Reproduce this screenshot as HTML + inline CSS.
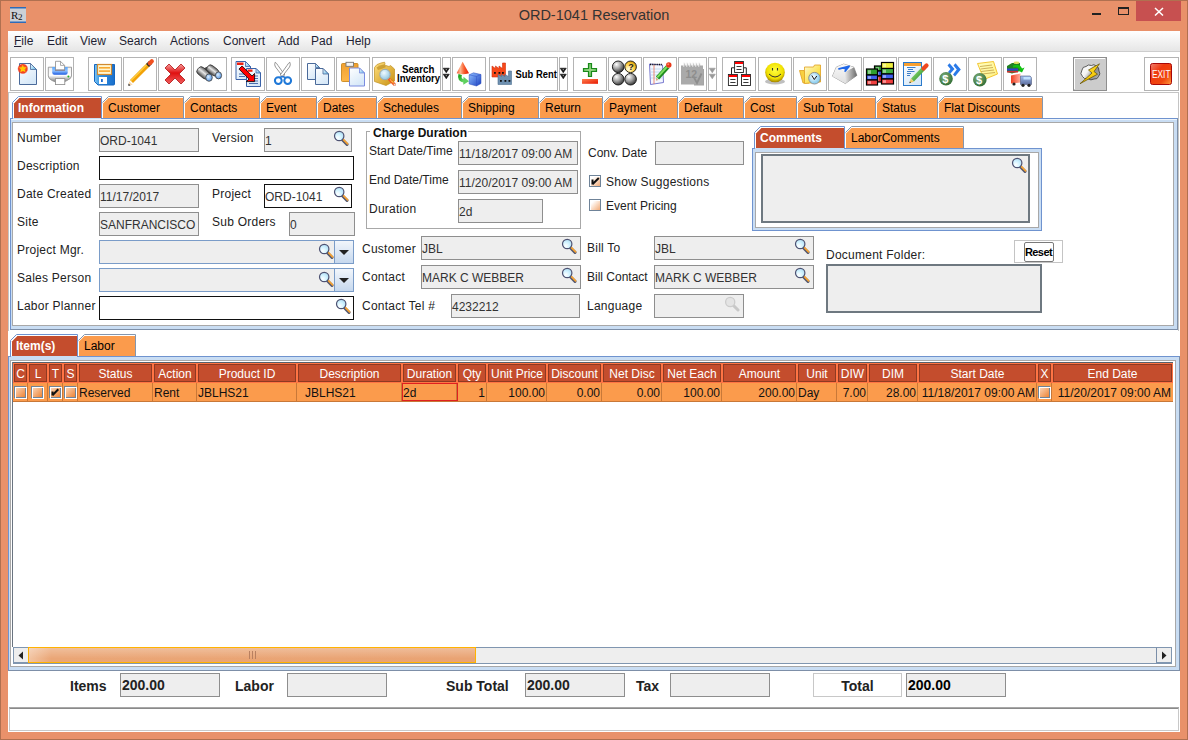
<!DOCTYPE html>
<html><head><meta charset="utf-8"><style>
html,body{margin:0;padding:0;width:1188px;height:740px;overflow:hidden;background:#E9916A}
div{position:absolute;box-sizing:border-box}
.t{white-space:nowrap;line-height:14px;font-family:"Liberation Sans",sans-serif}
</style></head><body>
<div style="left:0px;top:0px;width:1188px;height:740px;background:#E9916A"></div><div style="left:0px;top:0px;width:1188px;height:1px;background:#B07050"></div><div style="left:0px;top:0px;width:1px;height:740px;background:#B07050"></div><div style="left:1187px;top:0px;width:1px;height:740px;background:#B07050"></div><div style="left:0px;top:739px;width:1188px;height:1px;background:#B07050"></div><svg style="position:absolute;left:10px;top:7px" width="16" height="16" viewBox="0 0 16 16"><rect x="0" y="0" width="16" height="16" fill="#CCD0D6"/><rect x="0" y="0" width="16" height="1.5" fill="#2E6BB8"/><rect x="0" y="14.5" width="16" height="1.5" fill="#2E6BB8"/><text x="1" y="12" font-family="Liberation Serif" font-size="11" fill="#111">R</text><text x="8" y="13" font-family="Liberation Serif" font-size="9" fill="#111">2</text></svg><div class="t" style="left:394px;top:8px;width:400px;text-align:center;font-size:14.5px;font-weight:normal;color:#333;">ORD-1041 Reservation</div><div style="left:1092px;top:13px;width:9px;height:2px;background:#222"></div><div style="left:1118px;top:7px;width:11px;height:8px;border:1px solid #222;border-top:2px solid #222"></div><div style="left:1136px;top:1px;width:45px;height:20px;background:#C75050"></div><svg style="position:absolute;left:1154px;top:7px" width="10" height="9" viewBox="0 0 10 9"><path d="M1 1 L9 8.5 M9 1 L1 8.5" stroke="#fff" stroke-width="1.5"/></svg><div style="left:8px;top:31px;width:1172px;height:701px;background:#FFFFFF"></div><div style="left:8px;top:31px;width:1172px;height:20px;background:linear-gradient(#FFFFFF,#E6E6E6)"></div><div style="left:8px;top:51px;width:1172px;height:1px;background:#CDCDCD"></div><div class="t" style="left:14px;top:34px;font-size:12px;font-weight:normal;color:#1F1F33;"><u>F</u>ile</div><div class="t" style="left:47px;top:34px;font-size:12px;font-weight:normal;color:#1F1F33;">Edit</div><div class="t" style="left:80px;top:34px;font-size:12px;font-weight:normal;color:#1F1F33;">View</div><div class="t" style="left:119px;top:34px;font-size:12px;font-weight:normal;color:#1F1F33;">Search</div><div class="t" style="left:170px;top:34px;font-size:12px;font-weight:normal;color:#1F1F33;">Actions</div><div class="t" style="left:223px;top:34px;font-size:12px;font-weight:normal;color:#1F1F33;">Convert</div><div class="t" style="left:278px;top:34px;font-size:12px;font-weight:normal;color:#1F1F33;">Add</div><div class="t" style="left:311px;top:34px;font-size:12px;font-weight:normal;color:#1F1F33;">Pad</div><div class="t" style="left:346px;top:34px;font-size:12px;font-weight:normal;color:#1F1F33;">Help</div><div style="left:10px;top:57px;width:34px;height:34px;border:1px solid #B4B4B4;background:#FFFFFF"></div><div style="left:45px;top:57px;width:29px;height:34px;border:1px solid #B4B4B4;background:#FFFFFF"></div><div style="left:88px;top:57px;width:34px;height:34px;border:1px solid #B4B4B4;background:#FFFFFF"></div><div style="left:123px;top:57px;width:34px;height:34px;border:1px solid #B4B4B4;background:#FFFFFF"></div><div style="left:158px;top:57px;width:34px;height:34px;border:1px solid #B4B4B4;background:#FFFFFF"></div><div style="left:193px;top:57px;width:34px;height:34px;border:1px solid #B4B4B4;background:#FFFFFF"></div><div style="left:231px;top:57px;width:34px;height:34px;border:1px solid #B4B4B4;background:#FFFFFF"></div><div style="left:266px;top:57px;width:34px;height:34px;border:1px solid #B4B4B4;background:#FFFFFF"></div><div style="left:301px;top:57px;width:34px;height:34px;border:1px solid #B4B4B4;background:#FFFFFF"></div><div style="left:336px;top:57px;width:34px;height:34px;border:1px solid #B4B4B4;background:#FFFFFF"></div><div style="left:372px;top:57px;width:69px;height:34px;border:1px solid #B4B4B4;background:#FFFFFF"></div><div style="left:442px;top:57px;width:9px;height:34px;border:1px solid #B4B4B4;background:#FFFFFF"></div><div style="left:452px;top:57px;width:34px;height:34px;border:1px solid #B4B4B4;background:#FFFFFF"></div><div style="left:489px;top:57px;width:69px;height:34px;border:1px solid #B4B4B4;background:#FFFFFF"></div><div style="left:559px;top:57px;width:9px;height:34px;border:1px solid #B4B4B4;background:#FFFFFF"></div><div style="left:573px;top:57px;width:34px;height:34px;border:1px solid #B4B4B4;background:#FFFFFF"></div><div style="left:608px;top:57px;width:34px;height:34px;border:1px solid #B4B4B4;background:#FFFFFF"></div><div style="left:643px;top:57px;width:34px;height:34px;border:1px solid #B4B4B4;background:#FFFFFF"></div><div style="left:678px;top:57px;width:29px;height:34px;border:1px solid #B4B4B4;background:#FFFFFF"></div><div style="left:708px;top:57px;width:9px;height:34px;border:1px solid #B4B4B4;background:#FFFFFF"></div><div style="left:722px;top:57px;width:34px;height:34px;border:1px solid #B4B4B4;background:#FFFFFF"></div><div style="left:758px;top:57px;width:34px;height:34px;border:1px solid #B4B4B4;background:#FFFFFF"></div><div style="left:793px;top:57px;width:34px;height:34px;border:1px solid #B4B4B4;background:#FFFFFF"></div><div style="left:828px;top:57px;width:34px;height:34px;border:1px solid #B4B4B4;background:#FFFFFF"></div><div style="left:863px;top:57px;width:34px;height:34px;border:1px solid #B4B4B4;background:#FFFFFF"></div><div style="left:898px;top:57px;width:34px;height:34px;border:1px solid #B4B4B4;background:#FFFFFF"></div><div style="left:933px;top:57px;width:34px;height:34px;border:1px solid #B4B4B4;background:#FFFFFF"></div><div style="left:968px;top:57px;width:34px;height:34px;border:1px solid #B4B4B4;background:#FFFFFF"></div><div style="left:1003px;top:57px;width:34px;height:34px;border:1px solid #B4B4B4;background:#FFFFFF"></div><div style="left:1073px;top:57px;width:34px;height:34px;border:1px solid #8E8E8E;background:#FFFFFF"></div><div style="left:1144px;top:57px;width:35px;height:34px;border:1px solid #B4B4B4;background:#FFFFFF"></div><div style="left:8px;top:92px;width:1171px;height:239px;border:1px solid #C4C4C4;border-bottom:none"></div><div style="left:10px;top:118px;width:1168px;height:212px;border:1px solid #6F93CF;border-right-color:#7D8FA8;border-bottom-color:#7D8FA8;background:#C9DDF3"></div><div style="left:12px;top:122px;width:1162px;height:204px;border:1px solid #A8A8A8;border-right-color:#A8A8A8;background:#FFFFFF"></div><div style="left:11px;top:119px;width:1166px;height:1px;background:#EEF5FC"></div><svg style="position:absolute;left:12px;top:96px" width="90" height="22" viewBox="0 0 90 22"><polygon points="0,22 0,6 6,0 90,0 90,22" fill="#FFFFFF"/><polygon points="2,22 2,7.4 7.4,2 89,2 89,22" fill="#C44D2D"/><polyline points="0.5,22 0.5,6.5 6.5,0.5 89.5,0.5 89.5,22" fill="none" stroke="#6F93CF" stroke-width="1"/></svg><div style="left:13px;top:118px;width:88px;height:1px;background:#C9DDF3"></div><div class="t" style="left:18px;top:101px;font-size:12px;font-weight:bold;color:#FFFFFF;">Information</div><svg style="position:absolute;left:102px;top:96px" width="82" height="22" viewBox="0 0 82 22"><polygon points="0,22 0,6 6,0 82,0 82,22" fill="#FFFFFF"/><polygon points="1,22 1,7.4 6.4,2 81,2 81,22" fill="#FB9B4C"/><polyline points="0.5,6.5 6.5,0.5 81.5,0.5 81.5,22" fill="none" stroke="#8496AE" stroke-width="1"/></svg><div class="t" style="left:108px;top:101px;font-size:12px;font-weight:normal;color:#000000;">Customer</div><svg style="position:absolute;left:184px;top:96px" width="76" height="22" viewBox="0 0 76 22"><polygon points="0,22 0,6 6,0 76,0 76,22" fill="#FFFFFF"/><polygon points="1,22 1,7.4 6.4,2 75,2 75,22" fill="#FB9B4C"/><polyline points="0.5,6.5 6.5,0.5 75.5,0.5 75.5,22" fill="none" stroke="#8496AE" stroke-width="1"/></svg><div class="t" style="left:190px;top:101px;font-size:12px;font-weight:normal;color:#000000;">Contacts</div><svg style="position:absolute;left:260px;top:96px" width="57" height="22" viewBox="0 0 57 22"><polygon points="0,22 0,6 6,0 57,0 57,22" fill="#FFFFFF"/><polygon points="1,22 1,7.4 6.4,2 56,2 56,22" fill="#FB9B4C"/><polyline points="0.5,6.5 6.5,0.5 56.5,0.5 56.5,22" fill="none" stroke="#8496AE" stroke-width="1"/></svg><div class="t" style="left:266px;top:101px;font-size:12px;font-weight:normal;color:#000000;">Event</div><svg style="position:absolute;left:317px;top:96px" width="60" height="22" viewBox="0 0 60 22"><polygon points="0,22 0,6 6,0 60,0 60,22" fill="#FFFFFF"/><polygon points="1,22 1,7.4 6.4,2 59,2 59,22" fill="#FB9B4C"/><polyline points="0.5,6.5 6.5,0.5 59.5,0.5 59.5,22" fill="none" stroke="#8496AE" stroke-width="1"/></svg><div class="t" style="left:323px;top:101px;font-size:12px;font-weight:normal;color:#000000;">Dates</div><svg style="position:absolute;left:377px;top:96px" width="85" height="22" viewBox="0 0 85 22"><polygon points="0,22 0,6 6,0 85,0 85,22" fill="#FFFFFF"/><polygon points="1,22 1,7.4 6.4,2 84,2 84,22" fill="#FB9B4C"/><polyline points="0.5,6.5 6.5,0.5 84.5,0.5 84.5,22" fill="none" stroke="#8496AE" stroke-width="1"/></svg><div class="t" style="left:383px;top:101px;font-size:12px;font-weight:normal;color:#000000;">Schedules</div><svg style="position:absolute;left:462px;top:96px" width="77" height="22" viewBox="0 0 77 22"><polygon points="0,22 0,6 6,0 77,0 77,22" fill="#FFFFFF"/><polygon points="1,22 1,7.4 6.4,2 76,2 76,22" fill="#FB9B4C"/><polyline points="0.5,6.5 6.5,0.5 76.5,0.5 76.5,22" fill="none" stroke="#8496AE" stroke-width="1"/></svg><div class="t" style="left:468px;top:101px;font-size:12px;font-weight:normal;color:#000000;">Shipping</div><svg style="position:absolute;left:539px;top:96px" width="64" height="22" viewBox="0 0 64 22"><polygon points="0,22 0,6 6,0 64,0 64,22" fill="#FFFFFF"/><polygon points="1,22 1,7.4 6.4,2 63,2 63,22" fill="#FB9B4C"/><polyline points="0.5,6.5 6.5,0.5 63.5,0.5 63.5,22" fill="none" stroke="#8496AE" stroke-width="1"/></svg><div class="t" style="left:545px;top:101px;font-size:12px;font-weight:normal;color:#000000;">Return</div><svg style="position:absolute;left:603px;top:96px" width="75" height="22" viewBox="0 0 75 22"><polygon points="0,22 0,6 6,0 75,0 75,22" fill="#FFFFFF"/><polygon points="1,22 1,7.4 6.4,2 74,2 74,22" fill="#FB9B4C"/><polyline points="0.5,6.5 6.5,0.5 74.5,0.5 74.5,22" fill="none" stroke="#8496AE" stroke-width="1"/></svg><div class="t" style="left:609px;top:101px;font-size:12px;font-weight:normal;color:#000000;">Payment</div><svg style="position:absolute;left:678px;top:96px" width="66" height="22" viewBox="0 0 66 22"><polygon points="0,22 0,6 6,0 66,0 66,22" fill="#FFFFFF"/><polygon points="1,22 1,7.4 6.4,2 65,2 65,22" fill="#FB9B4C"/><polyline points="0.5,6.5 6.5,0.5 65.5,0.5 65.5,22" fill="none" stroke="#8496AE" stroke-width="1"/></svg><div class="t" style="left:684px;top:101px;font-size:12px;font-weight:normal;color:#000000;">Default</div><svg style="position:absolute;left:744px;top:96px" width="53" height="22" viewBox="0 0 53 22"><polygon points="0,22 0,6 6,0 53,0 53,22" fill="#FFFFFF"/><polygon points="1,22 1,7.4 6.4,2 52,2 52,22" fill="#FB9B4C"/><polyline points="0.5,6.5 6.5,0.5 52.5,0.5 52.5,22" fill="none" stroke="#8496AE" stroke-width="1"/></svg><div class="t" style="left:750px;top:101px;font-size:12px;font-weight:normal;color:#000000;">Cost</div><svg style="position:absolute;left:797px;top:96px" width="79" height="22" viewBox="0 0 79 22"><polygon points="0,22 0,6 6,0 79,0 79,22" fill="#FFFFFF"/><polygon points="1,22 1,7.4 6.4,2 78,2 78,22" fill="#FB9B4C"/><polyline points="0.5,6.5 6.5,0.5 78.5,0.5 78.5,22" fill="none" stroke="#8496AE" stroke-width="1"/></svg><div class="t" style="left:803px;top:101px;font-size:12px;font-weight:normal;color:#000000;">Sub Total</div><svg style="position:absolute;left:876px;top:96px" width="62" height="22" viewBox="0 0 62 22"><polygon points="0,22 0,6 6,0 62,0 62,22" fill="#FFFFFF"/><polygon points="1,22 1,7.4 6.4,2 61,2 61,22" fill="#FB9B4C"/><polyline points="0.5,6.5 6.5,0.5 61.5,0.5 61.5,22" fill="none" stroke="#8496AE" stroke-width="1"/></svg><div class="t" style="left:882px;top:101px;font-size:12px;font-weight:normal;color:#000000;">Status</div><svg style="position:absolute;left:938px;top:96px" width="105" height="22" viewBox="0 0 105 22"><polygon points="0,22 0,6 6,0 105,0 105,22" fill="#FFFFFF"/><polygon points="1,22 1,7.4 6.4,2 104,2 104,22" fill="#FB9B4C"/><polyline points="0.5,6.5 6.5,0.5 104.5,0.5 104.5,22" fill="none" stroke="#8496AE" stroke-width="1"/></svg><div class="t" style="left:944px;top:101px;font-size:12px;font-weight:normal;color:#000000;">Flat Discounts</div><div class="t" style="left:17px;top:131px;font-size:12px;font-weight:normal;color:#222;letter-spacing:0.25px">Number</div><div class="t" style="left:17px;top:159px;font-size:12px;font-weight:normal;color:#222;letter-spacing:0.25px">Description</div><div class="t" style="left:17px;top:187px;font-size:12px;font-weight:normal;color:#222;letter-spacing:0.25px">Date Created</div><div class="t" style="left:17px;top:215px;font-size:12px;font-weight:normal;color:#222;letter-spacing:0.25px">Site</div><div class="t" style="left:17px;top:243px;font-size:12px;font-weight:normal;color:#222;letter-spacing:0.25px">Project Mgr.</div><div class="t" style="left:17px;top:271px;font-size:12px;font-weight:normal;color:#222;letter-spacing:0.25px">Sales Person</div><div class="t" style="left:17px;top:299px;font-size:12px;font-weight:normal;color:#222;letter-spacing:0.25px">Labor Planner</div><div style="left:99px;top:128px;width:100px;height:24px;background:#EEEEEE;border:1px solid #8E8E8E"></div><div class="t" style="left:100px;top:134px;font-size:12px;font-weight:normal;color:#333;">ORD-1041</div><div class="t" style="left:212px;top:131px;font-size:12px;font-weight:normal;color:#222;letter-spacing:0.25px">Version</div><div style="left:264px;top:128px;width:88px;height:24px;background:#EEEEEE;border:1px solid #8E8E8E"></div><div class="t" style="left:265px;top:134px;font-size:12px;font-weight:normal;color:#333;">1</div><svg style="position:absolute;left:333px;top:130px" width="16" height="16" viewBox="0 0 16 16"><path d="M9.6 10 L14 14.4" stroke="#55586E" stroke-width="3" stroke-linecap="round"/><path d="M10.2 9.4 L14.6 13.8" stroke="#F5A232" stroke-width="1.7" stroke-linecap="round"/><circle cx="6.2" cy="6" r="4.7" fill="url(#magG)" stroke="#4E5272" stroke-width="1.2"/></svg><div style="left:99px;top:156px;width:255px;height:24px;background:#FFFFFF;border:1px solid #111"></div><div style="left:99px;top:184px;width:100px;height:24px;background:#EEEEEE;border:1px solid #8E8E8E"></div><div class="t" style="left:100px;top:190px;font-size:12px;font-weight:normal;color:#333;">11/17/2017</div><div class="t" style="left:212px;top:187px;font-size:12px;font-weight:normal;color:#222;letter-spacing:0.25px">Project</div><div style="left:264px;top:184px;width:88px;height:24px;background:#FFFFFF;border:1px solid #111"></div><div class="t" style="left:265px;top:190px;font-size:12px;font-weight:normal;color:#333;">ORD-1041</div><svg style="position:absolute;left:333px;top:186px" width="16" height="16" viewBox="0 0 16 16"><path d="M9.6 10 L14 14.4" stroke="#55586E" stroke-width="3" stroke-linecap="round"/><path d="M10.2 9.4 L14.6 13.8" stroke="#F5A232" stroke-width="1.7" stroke-linecap="round"/><circle cx="6.2" cy="6" r="4.7" fill="url(#magG)" stroke="#4E5272" stroke-width="1.2"/></svg><div style="left:99px;top:212px;width:100px;height:24px;background:#EEEEEE;border:1px solid #8E8E8E"></div><div class="t" style="left:100px;top:218px;font-size:12px;font-weight:normal;color:#333;">SANFRANCISCO</div><div class="t" style="left:212px;top:215px;font-size:12px;font-weight:normal;color:#222;letter-spacing:0.25px">Sub Orders</div><div style="left:289px;top:212px;width:66px;height:24px;background:#EEEEEE;border:1px solid #8E8E8E"></div><div class="t" style="left:290px;top:218px;font-size:12px;font-weight:normal;color:#333;">0</div><div style="left:99px;top:240px;width:255px;height:24px;background:#EEEEEE;border:1px solid #7A9CC8"></div><svg style="position:absolute;left:318px;top:243px" width="16" height="16" viewBox="0 0 16 16"><path d="M9.6 10 L14 14.4" stroke="#55586E" stroke-width="3" stroke-linecap="round"/><path d="M10.2 9.4 L14.6 13.8" stroke="#F5A232" stroke-width="1.7" stroke-linecap="round"/><circle cx="6.2" cy="6" r="4.7" fill="url(#magG)" stroke="#4E5272" stroke-width="1.2"/></svg><div style="left:334px;top:240px;width:20px;height:24px;background:linear-gradient(#F2F6FB,#C6D8EE);border:1px solid #7A9CC8"></div><svg style="position:absolute;left:338px;top:249px" width="12" height="7" viewBox="0 0 12 7"><polygon points="1,1 11,1 6,6" fill="#222"/></svg><div style="left:99px;top:268px;width:255px;height:24px;background:#EEEEEE;border:1px solid #7A9CC8"></div><svg style="position:absolute;left:318px;top:271px" width="16" height="16" viewBox="0 0 16 16"><path d="M9.6 10 L14 14.4" stroke="#55586E" stroke-width="3" stroke-linecap="round"/><path d="M10.2 9.4 L14.6 13.8" stroke="#F5A232" stroke-width="1.7" stroke-linecap="round"/><circle cx="6.2" cy="6" r="4.7" fill="url(#magG)" stroke="#4E5272" stroke-width="1.2"/></svg><div style="left:334px;top:268px;width:20px;height:24px;background:linear-gradient(#F2F6FB,#C6D8EE);border:1px solid #7A9CC8"></div><svg style="position:absolute;left:338px;top:277px" width="12" height="7" viewBox="0 0 12 7"><polygon points="1,1 11,1 6,6" fill="#222"/></svg><div style="left:99px;top:296px;width:255px;height:24px;background:#FFFFFF;border:1px solid #111"></div><svg style="position:absolute;left:335px;top:298px" width="16" height="16" viewBox="0 0 16 16"><path d="M9.6 10 L14 14.4" stroke="#55586E" stroke-width="3" stroke-linecap="round"/><path d="M10.2 9.4 L14.6 13.8" stroke="#F5A232" stroke-width="1.7" stroke-linecap="round"/><circle cx="6.2" cy="6" r="4.7" fill="url(#magG)" stroke="#4E5272" stroke-width="1.2"/></svg><div style="left:366px;top:131px;width:215px;height:98px;border:1px solid #A8A8A8"></div><div style="left:370px;top:126px;width:98px;height:12px;background:#FFFFFF"></div><div class="t" style="left:373px;top:126px;font-size:12px;font-weight:bold;color:#111;">Charge Duration</div><div class="t" style="left:369px;top:144px;font-size:12px;font-weight:normal;color:#222;">Start Date/Time</div><div style="left:458px;top:141px;width:120px;height:24px;background:#EEEEEE;border:1px solid #8E8E8E"></div><div class="t" style="left:459px;top:147px;font-size:12px;font-weight:normal;color:#333;">11/18/2017 09:00 AM</div><div class="t" style="left:369px;top:173px;font-size:12px;font-weight:normal;color:#222;">End Date/Time</div><div style="left:458px;top:170px;width:120px;height:24px;background:#EEEEEE;border:1px solid #8E8E8E"></div><div class="t" style="left:459px;top:176px;font-size:12px;font-weight:normal;color:#333;">11/20/2017 09:00 AM</div><div class="t" style="left:369px;top:202px;font-size:12px;font-weight:normal;color:#222;letter-spacing:0.25px">Duration</div><div style="left:458px;top:199px;width:85px;height:24px;background:#EEEEEE;border:1px solid #8E8E8E"></div><div class="t" style="left:459px;top:205px;font-size:12px;font-weight:normal;color:#333;">2d</div><div class="t" style="left:588px;top:146px;font-size:12px;font-weight:normal;color:#222;">Conv. Date</div><div style="left:655px;top:141px;width:89px;height:24px;background:#EEEEEE;border:1px solid #8E8E8E"></div><svg style="position:absolute;left:589px;top:175px" width="12" height="12" viewBox="0 0 12 12"><defs><linearGradient id="cb589_175" x1="0" y1="0" x2="1" y2="1"><stop offset="0.25" stop-color="#FFFFFF"/><stop offset="1" stop-color="#F2A66E"/></linearGradient></defs><rect x="0.5" y="0.5" width="11" height="11" fill="url(#cb589_175)" stroke="#6F8398"/><path d="M1.5 11 V1.5 H11" fill="none" stroke="#FFFFFF"/><path d="M3.5 4.5 V9.5 M3.5 9.2 L9.8 3" fill="none" stroke="#111" stroke-width="2"/></svg><div class="t" style="left:606px;top:175px;font-size:12px;font-weight:normal;color:#222;letter-spacing:0.25px">Show Suggestions</div><svg style="position:absolute;left:589px;top:199px" width="12" height="12" viewBox="0 0 12 12"><defs><linearGradient id="cb589_199" x1="0" y1="0" x2="1" y2="1"><stop offset="0.25" stop-color="#FFFFFF"/><stop offset="1" stop-color="#F2A66E"/></linearGradient></defs><rect x="0.5" y="0.5" width="11" height="11" fill="url(#cb589_199)" stroke="#6F8398"/><path d="M1.5 11 V1.5 H11" fill="none" stroke="#FFFFFF"/></svg><div class="t" style="left:606px;top:199px;font-size:12px;font-weight:normal;color:#222;">Event Pricing</div><div style="left:752px;top:148px;width:290px;height:83px;border:1px solid #6F93CF;background:#C9DDF3"></div><svg style="position:absolute;left:754px;top:126px" width="91" height="22" viewBox="0 0 91 22"><polygon points="0,22 0,6 6,0 91,0 91,22" fill="#FFFFFF"/><polygon points="2,22 2,7.4 7.4,2 90,2 90,22" fill="#C44D2D"/><polyline points="0.5,22 0.5,6.5 6.5,0.5 90.5,0.5 90.5,22" fill="none" stroke="#6F93CF" stroke-width="1"/></svg><div style="left:755px;top:148px;width:89px;height:1px;background:#C9DDF3"></div><div class="t" style="left:760px;top:131px;font-size:12px;font-weight:bold;color:#FFFFFF;">Comments</div><svg style="position:absolute;left:845px;top:126px" width="119" height="22" viewBox="0 0 119 22"><polygon points="0,22 0,6 6,0 119,0 119,22" fill="#FFFFFF"/><polygon points="1,22 1,7.4 6.4,2 118,2 118,22" fill="#FB9B4C"/><polyline points="0.5,6.5 6.5,0.5 118.5,0.5 118.5,22" fill="none" stroke="#8496AE" stroke-width="1"/></svg><div class="t" style="left:851px;top:131px;font-size:12px;font-weight:normal;color:#000000;">LaborComments</div><div style="left:755px;top:152px;width:284px;height:76px;border:1px solid #A8A8A8;background:#fff"></div><div style="left:761px;top:154px;width:269px;height:69px;background:#EEEEEE;border:2px solid #6E7880"></div><svg style="position:absolute;left:1011px;top:157px" width="16" height="16" viewBox="0 0 16 16"><path d="M9.6 10 L14 14.4" stroke="#55586E" stroke-width="3" stroke-linecap="round"/><path d="M10.2 9.4 L14.6 13.8" stroke="#F5A232" stroke-width="1.7" stroke-linecap="round"/><circle cx="6.2" cy="6" r="4.7" fill="url(#magG)" stroke="#4E5272" stroke-width="1.2"/></svg><div class="t" style="left:362px;top:242px;font-size:12px;font-weight:normal;color:#222;letter-spacing:0.25px">Customer</div><div style="left:421px;top:236px;width:160px;height:24px;background:#EEEEEE;border:1px solid #8E8E8E"></div><div class="t" style="left:422px;top:242px;font-size:12px;font-weight:normal;color:#333;">JBL</div><svg style="position:absolute;left:561px;top:238px" width="16" height="16" viewBox="0 0 16 16"><path d="M9.6 10 L14 14.4" stroke="#55586E" stroke-width="3" stroke-linecap="round"/><path d="M10.2 9.4 L14.6 13.8" stroke="#F5A232" stroke-width="1.7" stroke-linecap="round"/><circle cx="6.2" cy="6" r="4.7" fill="url(#magG)" stroke="#4E5272" stroke-width="1.2"/></svg><div class="t" style="left:362px;top:270px;font-size:12px;font-weight:normal;color:#222;letter-spacing:0.25px">Contact</div><div style="left:421px;top:265px;width:160px;height:24px;background:#EEEEEE;border:1px solid #8E8E8E"></div><div class="t" style="left:422px;top:271px;font-size:12px;font-weight:normal;color:#333;">MARK C WEBBER</div><svg style="position:absolute;left:561px;top:267px" width="16" height="16" viewBox="0 0 16 16"><path d="M9.6 10 L14 14.4" stroke="#55586E" stroke-width="3" stroke-linecap="round"/><path d="M10.2 9.4 L14.6 13.8" stroke="#F5A232" stroke-width="1.7" stroke-linecap="round"/><circle cx="6.2" cy="6" r="4.7" fill="url(#magG)" stroke="#4E5272" stroke-width="1.2"/></svg><div class="t" style="left:362px;top:299px;font-size:12px;font-weight:normal;color:#222;letter-spacing:0.25px">Contact Tel #</div><div style="left:451px;top:294px;width:129px;height:24px;background:#EEEEEE;border:1px solid #8E8E8E"></div><div class="t" style="left:452px;top:300px;font-size:12px;font-weight:normal;color:#333;">4232212</div><div class="t" style="left:587px;top:241px;font-size:12px;font-weight:normal;color:#222;letter-spacing:0.25px">Bill To</div><div style="left:654px;top:236px;width:160px;height:24px;background:#EEEEEE;border:1px solid #8E8E8E"></div><div class="t" style="left:655px;top:242px;font-size:12px;font-weight:normal;color:#333;">JBL</div><svg style="position:absolute;left:794px;top:238px" width="16" height="16" viewBox="0 0 16 16"><path d="M9.6 10 L14 14.4" stroke="#55586E" stroke-width="3" stroke-linecap="round"/><path d="M10.2 9.4 L14.6 13.8" stroke="#F5A232" stroke-width="1.7" stroke-linecap="round"/><circle cx="6.2" cy="6" r="4.7" fill="url(#magG)" stroke="#4E5272" stroke-width="1.2"/></svg><div class="t" style="left:587px;top:270px;font-size:12px;font-weight:normal;color:#222;">Bill Contact</div><div style="left:654px;top:265px;width:160px;height:24px;background:#EEEEEE;border:1px solid #8E8E8E"></div><div class="t" style="left:655px;top:271px;font-size:12px;font-weight:normal;color:#333;">MARK C WEBBER</div><svg style="position:absolute;left:794px;top:267px" width="16" height="16" viewBox="0 0 16 16"><path d="M9.6 10 L14 14.4" stroke="#55586E" stroke-width="3" stroke-linecap="round"/><path d="M10.2 9.4 L14.6 13.8" stroke="#F5A232" stroke-width="1.7" stroke-linecap="round"/><circle cx="6.2" cy="6" r="4.7" fill="url(#magG)" stroke="#4E5272" stroke-width="1.2"/></svg><div class="t" style="left:587px;top:299px;font-size:12px;font-weight:normal;color:#222;letter-spacing:0.25px">Language</div><div style="left:654px;top:294px;width:90px;height:24px;background:#EEEEEE;border:1px solid #8E8E8E"></div><svg style="position:absolute;left:724px;top:296px" width="16" height="16" viewBox="0 0 16 16"><path d="M9.5 9.5 L14 14" stroke="#C8C8C8" stroke-width="3" stroke-linecap="round"/><circle cx="6.2" cy="6" r="4.6" fill="#E4E4E4" stroke="#CCCCCC" stroke-width="1.3"/></svg><div class="t" style="left:826px;top:248px;font-size:12px;font-weight:normal;color:#222;letter-spacing:0.25px">Document Folder:</div><div style="left:826px;top:264px;width:216px;height:49px;background:#EEEEEE;border:2px solid #6E7880"></div><div style="left:1014px;top:240px;width:49px;height:23px;border:1px solid #C4C4C4;background:#fff"></div><div style="left:1024px;top:242px;width:30px;height:20px;border:1px solid #7A7A7A;background:#fff;border-radius:2px"></div><div class="t" style="left:1025px;top:245px;font-size:11px;font-weight:bold;color:#000;letter-spacing:-0.6px">Reset</div><div style="left:8px;top:356px;width:1172px;height:315px;border:1px solid #6F93CF;border-right-color:#7D8FA8;border-bottom-color:#7D8FA8;background:#C9DDF3"></div><svg style="position:absolute;left:10px;top:334px" width="68" height="22" viewBox="0 0 68 22"><polygon points="0,22 0,6 6,0 68,0 68,22" fill="#FFFFFF"/><polygon points="2,22 2,7.4 7.4,2 67,2 67,22" fill="#C44D2D"/><polyline points="0.5,22 0.5,6.5 6.5,0.5 67.5,0.5 67.5,22" fill="none" stroke="#6F93CF" stroke-width="1"/></svg><div style="left:11px;top:356px;width:66px;height:1px;background:#C9DDF3"></div><div class="t" style="left:16px;top:339px;font-size:12px;font-weight:bold;color:#FFFFFF;">Item(s)</div><svg style="position:absolute;left:78px;top:334px" width="58" height="22" viewBox="0 0 58 22"><polygon points="0,22 0,6 6,0 58,0 58,22" fill="#FFFFFF"/><polygon points="1,22 1,7.4 6.4,2 57,2 57,22" fill="#FB9B4C"/><polyline points="0.5,6.5 6.5,0.5 57.5,0.5 57.5,22" fill="none" stroke="#8496AE" stroke-width="1"/></svg><div class="t" style="left:84px;top:339px;font-size:12px;font-weight:normal;color:#000000;">Labor</div><div style="left:10px;top:360px;width:1166px;height:307px;border:1px solid #A8A8A8;background:#fff"></div><div style="left:12px;top:362px;width:1161px;height:1px;background:#56606A"></div><div style="left:12px;top:362px;width:1px;height:285px;background:#6A7480"></div><div style="left:13px;top:363px;width:15px;height:20px;background:#FF7444"></div><div style="left:14px;top:364px;width:13px;height:18px;background:#C44D2D;border:1px solid #8E3A22"></div><div class="t" style="left:13px;top:367px;width:15px;text-align:center;font-size:12px;font-weight:normal;color:#FFFFFF;">C</div><div style="left:28px;top:363px;width:20px;height:20px;background:#FF7444"></div><div style="left:29px;top:364px;width:18px;height:18px;background:#C44D2D;border:1px solid #8E3A22"></div><div class="t" style="left:28px;top:367px;width:20px;text-align:center;font-size:12px;font-weight:normal;color:#FFFFFF;">L</div><div style="left:48px;top:363px;width:15px;height:20px;background:#FF7444"></div><div style="left:49px;top:364px;width:13px;height:18px;background:#C44D2D;border:1px solid #8E3A22"></div><div class="t" style="left:48px;top:367px;width:15px;text-align:center;font-size:12px;font-weight:normal;color:#FFFFFF;">T</div><div style="left:63px;top:363px;width:15px;height:20px;background:#FF7444"></div><div style="left:64px;top:364px;width:13px;height:18px;background:#C44D2D;border:1px solid #8E3A22"></div><div class="t" style="left:63px;top:367px;width:15px;text-align:center;font-size:12px;font-weight:normal;color:#FFFFFF;">S</div><div style="left:78px;top:363px;width:75px;height:20px;background:#FF7444"></div><div style="left:79px;top:364px;width:73px;height:18px;background:#C44D2D;border:1px solid #8E3A22"></div><div class="t" style="left:78px;top:367px;width:75px;text-align:center;font-size:12px;font-weight:normal;color:#FFFFFF;">Status</div><div style="left:153px;top:363px;width:44px;height:20px;background:#FF7444"></div><div style="left:154px;top:364px;width:42px;height:18px;background:#C44D2D;border:1px solid #8E3A22"></div><div class="t" style="left:153px;top:367px;width:44px;text-align:center;font-size:12px;font-weight:normal;color:#FFFFFF;">Action</div><div style="left:197px;top:363px;width:100px;height:20px;background:#FF7444"></div><div style="left:198px;top:364px;width:98px;height:18px;background:#C44D2D;border:1px solid #8E3A22"></div><div class="t" style="left:197px;top:367px;width:100px;text-align:center;font-size:12px;font-weight:normal;color:#FFFFFF;">Product ID</div><div style="left:297px;top:363px;width:105px;height:20px;background:#FF7444"></div><div style="left:298px;top:364px;width:103px;height:18px;background:#C44D2D;border:1px solid #8E3A22"></div><div class="t" style="left:297px;top:367px;width:105px;text-align:center;font-size:12px;font-weight:normal;color:#FFFFFF;">Description</div><div style="left:402px;top:363px;width:55px;height:20px;background:#FF7444"></div><div style="left:403px;top:364px;width:53px;height:18px;background:#C44D2D;border:1px solid #8E3A22"></div><div class="t" style="left:402px;top:367px;width:55px;text-align:center;font-size:12px;font-weight:normal;color:#FFFFFF;">Duration</div><div style="left:457px;top:363px;width:30px;height:20px;background:#FF7444"></div><div style="left:458px;top:364px;width:28px;height:18px;background:#C44D2D;border:1px solid #8E3A22"></div><div class="t" style="left:457px;top:367px;width:30px;text-align:center;font-size:12px;font-weight:normal;color:#FFFFFF;">Qty</div><div style="left:487px;top:363px;width:60px;height:20px;background:#FF7444"></div><div style="left:488px;top:364px;width:58px;height:18px;background:#C44D2D;border:1px solid #8E3A22"></div><div class="t" style="left:487px;top:367px;width:60px;text-align:center;font-size:12px;font-weight:normal;color:#FFFFFF;">Unit Price</div><div style="left:547px;top:363px;width:55px;height:20px;background:#FF7444"></div><div style="left:548px;top:364px;width:53px;height:18px;background:#C44D2D;border:1px solid #8E3A22"></div><div class="t" style="left:547px;top:367px;width:55px;text-align:center;font-size:12px;font-weight:normal;color:#FFFFFF;">Discount</div><div style="left:602px;top:363px;width:60px;height:20px;background:#FF7444"></div><div style="left:603px;top:364px;width:58px;height:18px;background:#C44D2D;border:1px solid #8E3A22"></div><div class="t" style="left:602px;top:367px;width:60px;text-align:center;font-size:12px;font-weight:normal;color:#FFFFFF;">Net Disc</div><div style="left:662px;top:363px;width:60px;height:20px;background:#FF7444"></div><div style="left:663px;top:364px;width:58px;height:18px;background:#C44D2D;border:1px solid #8E3A22"></div><div class="t" style="left:662px;top:367px;width:60px;text-align:center;font-size:12px;font-weight:normal;color:#FFFFFF;">Net Each</div><div style="left:722px;top:363px;width:75px;height:20px;background:#FF7444"></div><div style="left:723px;top:364px;width:73px;height:18px;background:#C44D2D;border:1px solid #8E3A22"></div><div class="t" style="left:722px;top:367px;width:75px;text-align:center;font-size:12px;font-weight:normal;color:#FFFFFF;">Amount</div><div style="left:797px;top:363px;width:40px;height:20px;background:#FF7444"></div><div style="left:798px;top:364px;width:38px;height:18px;background:#C44D2D;border:1px solid #8E3A22"></div><div class="t" style="left:797px;top:367px;width:40px;text-align:center;font-size:12px;font-weight:normal;color:#FFFFFF;">Unit</div><div style="left:837px;top:363px;width:31px;height:20px;background:#FF7444"></div><div style="left:838px;top:364px;width:29px;height:18px;background:#C44D2D;border:1px solid #8E3A22"></div><div class="t" style="left:837px;top:367px;width:31px;text-align:center;font-size:12px;font-weight:normal;color:#FFFFFF;">DIW</div><div style="left:868px;top:363px;width:50px;height:20px;background:#FF7444"></div><div style="left:869px;top:364px;width:48px;height:18px;background:#C44D2D;border:1px solid #8E3A22"></div><div class="t" style="left:868px;top:367px;width:50px;text-align:center;font-size:12px;font-weight:normal;color:#FFFFFF;">DIM</div><div style="left:918px;top:363px;width:119px;height:20px;background:#FF7444"></div><div style="left:919px;top:364px;width:117px;height:18px;background:#C44D2D;border:1px solid #8E3A22"></div><div class="t" style="left:918px;top:367px;width:119px;text-align:center;font-size:12px;font-weight:normal;color:#FFFFFF;">Start Date</div><div style="left:1037px;top:363px;width:15px;height:20px;background:#FF7444"></div><div style="left:1038px;top:364px;width:13px;height:18px;background:#C44D2D;border:1px solid #8E3A22"></div><div class="t" style="left:1037px;top:367px;width:15px;text-align:center;font-size:12px;font-weight:normal;color:#FFFFFF;">X</div><div style="left:1052px;top:363px;width:121px;height:20px;background:#FF7444"></div><div style="left:1053px;top:364px;width:119px;height:18px;background:#C44D2D;border:1px solid #8E3A22"></div><div class="t" style="left:1052px;top:367px;width:121px;text-align:center;font-size:12px;font-weight:normal;color:#FFFFFF;">End Date</div><div style="left:13px;top:383px;width:1160px;height:19px;background:#FB9B4C"></div><div style="left:13px;top:401px;width:1160px;height:1px;background:#C87838"></div><div style="left:27px;top:383px;width:1px;height:19px;background:#C87838"></div><div style="left:47px;top:383px;width:1px;height:19px;background:#C87838"></div><div style="left:62px;top:383px;width:1px;height:19px;background:#C87838"></div><div style="left:77px;top:383px;width:1px;height:19px;background:#C87838"></div><div style="left:152px;top:383px;width:1px;height:19px;background:#C87838"></div><div style="left:196px;top:383px;width:1px;height:19px;background:#C87838"></div><div style="left:296px;top:383px;width:1px;height:19px;background:#C87838"></div><div style="left:401px;top:383px;width:1px;height:19px;background:#C87838"></div><div style="left:456px;top:383px;width:1px;height:19px;background:#C87838"></div><div style="left:486px;top:383px;width:1px;height:19px;background:#C87838"></div><div style="left:546px;top:383px;width:1px;height:19px;background:#C87838"></div><div style="left:601px;top:383px;width:1px;height:19px;background:#C87838"></div><div style="left:661px;top:383px;width:1px;height:19px;background:#C87838"></div><div style="left:721px;top:383px;width:1px;height:19px;background:#C87838"></div><div style="left:796px;top:383px;width:1px;height:19px;background:#C87838"></div><div style="left:836px;top:383px;width:1px;height:19px;background:#C87838"></div><div style="left:867px;top:383px;width:1px;height:19px;background:#C87838"></div><div style="left:917px;top:383px;width:1px;height:19px;background:#C87838"></div><div style="left:1036px;top:383px;width:1px;height:19px;background:#C87838"></div><div style="left:1051px;top:383px;width:1px;height:19px;background:#C87838"></div><svg style="position:absolute;left:14px;top:386px" width="13" height="13" viewBox="0 0 13 13"><defs><linearGradient id="cb14_386" x1="0" y1="0" x2="1" y2="1"><stop offset="0" stop-color="#FAD2B4"/><stop offset="1" stop-color="#EE8434"/></linearGradient></defs><rect x="0.5" y="0.5" width="11" height="11" fill="none" stroke="#6F8398"/><rect x="1.5" y="1.5" width="11" height="11" fill="none" stroke="#FFFFFF"/><rect x="2" y="2" width="9" height="9" fill="url(#cb14_386)"/></svg><svg style="position:absolute;left:31px;top:386px" width="13" height="13" viewBox="0 0 13 13"><defs><linearGradient id="cb31_386" x1="0" y1="0" x2="1" y2="1"><stop offset="0" stop-color="#FAD2B4"/><stop offset="1" stop-color="#EE8434"/></linearGradient></defs><rect x="0.5" y="0.5" width="11" height="11" fill="none" stroke="#6F8398"/><rect x="1.5" y="1.5" width="11" height="11" fill="none" stroke="#FFFFFF"/><rect x="2" y="2" width="9" height="9" fill="url(#cb31_386)"/></svg><svg style="position:absolute;left:49px;top:386px" width="13" height="13" viewBox="0 0 13 13"><defs><linearGradient id="cb49_386" x1="0" y1="0" x2="1" y2="1"><stop offset="0" stop-color="#FAD2B4"/><stop offset="1" stop-color="#EE8434"/></linearGradient></defs><rect x="0.5" y="0.5" width="11" height="11" fill="none" stroke="#6F8398"/><rect x="1.5" y="1.5" width="11" height="11" fill="none" stroke="#FFFFFF"/><rect x="2" y="2" width="9" height="9" fill="url(#cb49_386)"/><path d="M3.5 5.5 V9.5 M3.5 9.2 L9.3 3.3" fill="none" stroke="#111" stroke-width="2"/></svg><svg style="position:absolute;left:64px;top:386px" width="13" height="13" viewBox="0 0 13 13"><defs><linearGradient id="cb64_386" x1="0" y1="0" x2="1" y2="1"><stop offset="0" stop-color="#FAD2B4"/><stop offset="1" stop-color="#EE8434"/></linearGradient></defs><rect x="0.5" y="0.5" width="11" height="11" fill="none" stroke="#6F8398"/><rect x="1.5" y="1.5" width="11" height="11" fill="none" stroke="#FFFFFF"/><rect x="2" y="2" width="9" height="9" fill="url(#cb64_386)"/></svg><svg style="position:absolute;left:1038px;top:386px" width="13" height="13" viewBox="0 0 13 13"><defs><linearGradient id="cb1038_386" x1="0" y1="0" x2="1" y2="1"><stop offset="0" stop-color="#FAD2B4"/><stop offset="1" stop-color="#EE8434"/></linearGradient></defs><rect x="0.5" y="0.5" width="11" height="11" fill="none" stroke="#6F8398"/><rect x="1.5" y="1.5" width="11" height="11" fill="none" stroke="#FFFFFF"/><rect x="2" y="2" width="9" height="9" fill="url(#cb1038_386)"/></svg><div class="t" style="left:79px;top:386px;font-size:12px;font-weight:normal;color:#111;">Reserved</div><div class="t" style="left:154px;top:386px;font-size:12px;font-weight:normal;color:#111;">Rent</div><div class="t" style="left:198px;top:386px;font-size:12px;font-weight:normal;color:#111;">JBLHS21</div><div class="t" style="left:305px;top:386px;font-size:12px;font-weight:normal;color:#111;">JBLHS21</div><div class="t" style="left:403px;top:386px;font-size:12px;font-weight:normal;color:#111;">2d</div><div class="t" style="left:457px;top:386px;width:28px;text-align:right;font-size:12px;font-weight:normal;color:#111;">1</div><div class="t" style="left:487px;top:386px;width:58px;text-align:right;font-size:12px;font-weight:normal;color:#111;">100.00</div><div class="t" style="left:547px;top:386px;width:53px;text-align:right;font-size:12px;font-weight:normal;color:#111;">0.00</div><div class="t" style="left:602px;top:386px;width:58px;text-align:right;font-size:12px;font-weight:normal;color:#111;">0.00</div><div class="t" style="left:662px;top:386px;width:58px;text-align:right;font-size:12px;font-weight:normal;color:#111;">100.00</div><div class="t" style="left:722px;top:386px;width:73px;text-align:right;font-size:12px;font-weight:normal;color:#111;">200.00</div><div class="t" style="left:798px;top:386px;font-size:12px;font-weight:normal;color:#111;">Day</div><div class="t" style="left:837px;top:386px;width:29px;text-align:right;font-size:12px;font-weight:normal;color:#111;">7.00</div><div class="t" style="left:868px;top:386px;width:48px;text-align:right;font-size:12px;font-weight:normal;color:#111;">28.00</div><div class="t" style="left:918px;top:386px;width:117px;text-align:right;font-size:12px;font-weight:normal;color:#111;">11/18/2017 09:00 AM</div><div class="t" style="left:1052px;top:386px;width:119px;text-align:right;font-size:12px;font-weight:normal;color:#111;">11/20/2017 09:00 AM</div><div style="left:402px;top:383px;width:56px;height:18px;border:1px solid #E02020"></div><div style="left:13px;top:647px;width:1159px;height:17px;background:#EEEEEE;border-top:1px solid #8096B0;border-bottom:1px solid #8096B0"></div><div style="left:13px;top:647px;width:16px;height:16px;background:#EEEEEE;border:1px solid #8096B0;border-right-color:#D0D8E0"></div><svg style="position:absolute;left:17px;top:651px" width="8" height="9" viewBox="0 0 8 9"><polygon points="6,0.5 6,8.5 1.5,4.5" fill="#222"/></svg><div style="left:28px;top:647px;width:448px;height:16px;background:linear-gradient(rgba(255,255,255,0.28),rgba(255,255,255,0) 75%),linear-gradient(90deg,#F2C4A2,#EAA676 5%,#E9A373);border:1px solid #FFB300"></div><div style="left:249px;top:651px;width:7px;height:8px;border-left:1px solid #B98060;border-right:1px solid #B98060"></div><div style="left:252px;top:651px;width:1px;height:8px;background:#B98060"></div><div style="left:1156px;top:647px;width:16px;height:16px;background:#EEEEEE;border:1px solid #8096B0;border-left-color:#7A8EA8"></div><svg style="position:absolute;left:1160px;top:651px" width="8" height="9" viewBox="0 0 8 9"><polygon points="2,0.5 2,8.5 6.5,4.5" fill="#222"/></svg><div class="t" style="left:70px;top:679px;font-size:14px;font-weight:bold;color:#222;">Items</div><div style="left:120px;top:673px;width:100px;height:24px;background:#EEEEEE;border:1px solid #8E8E8E"></div><div class="t" style="left:122px;top:678px;font-size:14px;font-weight:bold;color:#222;">200.00</div><div class="t" style="left:235px;top:679px;font-size:14px;font-weight:bold;color:#222;">Labor</div><div style="left:287px;top:673px;width:100px;height:24px;background:#EEEEEE;border:1px solid #8E8E8E"></div><div class="t" style="left:446px;top:679px;font-size:14px;font-weight:bold;color:#222;">Sub Total</div><div style="left:525px;top:673px;width:100px;height:24px;background:#EEEEEE;border:1px solid #8E8E8E"></div><div class="t" style="left:527px;top:678px;font-size:14px;font-weight:bold;color:#222;">200.00</div><div class="t" style="left:636px;top:679px;font-size:14px;font-weight:bold;color:#222;">Tax</div><div style="left:670px;top:673px;width:100px;height:24px;background:#EEEEEE;border:1px solid #8E8E8E"></div><div style="left:813px;top:673px;width:89px;height:24px;border:1px solid #C8C8C8;background:#fff"></div><div class="t" style="left:813px;top:679px;width:89px;text-align:center;font-size:14px;font-weight:bold;color:#222;">Total</div><div style="left:906px;top:673px;width:100px;height:24px;background:#EEEEEE;border:1px solid #8E8E8E"></div><div class="t" style="left:908px;top:678px;font-size:14px;font-weight:bold;color:#000;">200.00</div><div style="left:9px;top:707px;width:1170px;height:24px;border:1px solid #C8C8C8;border-top:2px solid #8A8A8A;background:#fff"></div><div style="left:9px;top:707px;width:1170px;height:1px;background:#A8A8A8"></div>
<svg width="0" height="0" style="position:absolute"><defs>
<linearGradient id="pageG" x1="0" y1="0" x2="0.6" y2="1"><stop offset="0" stop-color="#FFFFFF"/><stop offset="1" stop-color="#D6E8F8"/></linearGradient>
<linearGradient id="foldG" x1="0" y1="0" x2="1" y2="1"><stop offset="0" stop-color="#FFFFFF"/><stop offset="1" stop-color="#5DB7E8"/></linearGradient>
<radialGradient id="burstG"><stop offset="0" stop-color="#FFB000"/><stop offset="0.35" stop-color="#FF7020"/><stop offset="0.75" stop-color="#F03A20"/><stop offset="1" stop-color="#F04020" stop-opacity="0"/></radialGradient>
<linearGradient id="printG" x1="0" y1="0" x2="0" y2="1"><stop offset="0" stop-color="#F0F0F0"/><stop offset="0.55" stop-color="#FFFFFF"/><stop offset="1" stop-color="#7A7A7A"/></linearGradient>
<linearGradient id="trayG" x1="0" y1="0" x2="0" y2="1"><stop offset="0" stop-color="#5AA8FF"/><stop offset="0.5" stop-color="#8CC0FF"/><stop offset="1" stop-color="#1A58E0"/></linearGradient>
<linearGradient id="floppyG" x1="0" y1="0" x2="1" y2="0"><stop offset="0" stop-color="#7EC6F4"/><stop offset="0.3" stop-color="#2F8FE0"/><stop offset="1" stop-color="#1A6FCC"/></linearGradient>
<linearGradient id="xG" x1="0" y1="0" x2="0" y2="1"><stop offset="0" stop-color="#F6A0A0"/><stop offset="0.45" stop-color="#E01010"/><stop offset="1" stop-color="#F06060"/></linearGradient>
<linearGradient id="binoG" x1="0" y1="0" x2="0" y2="1"><stop offset="0" stop-color="#5A5A5A"/><stop offset="0.45" stop-color="#E8E8E8"/><stop offset="0.7" stop-color="#A0A0A0"/><stop offset="1" stop-color="#404040"/></linearGradient>
<radialGradient id="lensG" cx="0.4" cy="0.4"><stop offset="0" stop-color="#E0F0FF"/><stop offset="1" stop-color="#6EA6E8"/></radialGradient>
<radialGradient id="lensB" cx="0.4" cy="0.35" r="0.7"><stop offset="0" stop-color="#F0FAFF"/><stop offset="1" stop-color="#8CC4E0"/></radialGradient><radialGradient id="magG" cx="0.35" cy="0.7" r="0.8"><stop offset="0" stop-color="#FFFFFF"/><stop offset="0.5" stop-color="#D0F2FF"/><stop offset="1" stop-color="#A8D8F0"/></radialGradient><linearGradient id="clipG" x1="0" y1="0" x2="0" y2="1"><stop offset="0" stop-color="#F0A030"/><stop offset="1" stop-color="#FFB848"/></linearGradient>
<linearGradient id="boxG" x1="0" y1="0" x2="1" y2="1"><stop offset="0" stop-color="#FFE080"/><stop offset="1" stop-color="#C89010"/></linearGradient>
<linearGradient id="coneG" x1="0" y1="0" x2="1" y2="0"><stop offset="0" stop-color="#F05030"/><stop offset="0.3" stop-color="#FFB890"/><stop offset="0.6" stop-color="#F86030"/><stop offset="1" stop-color="#E81800"/></linearGradient>
<linearGradient id="cubeG" x1="0" y1="0" x2="1" y2="1"><stop offset="0" stop-color="#90C0FF"/><stop offset="1" stop-color="#1A40C0"/></linearGradient>
<linearGradient id="arrG" x1="0" y1="0" x2="1" y2="1"><stop offset="0" stop-color="#18A018"/><stop offset="1" stop-color="#70E070"/></linearGradient>
<linearGradient id="plusG" x1="0" y1="0" x2="1" y2="1"><stop offset="0" stop-color="#3EA83A"/><stop offset="0.5" stop-color="#9AD888"/><stop offset="1" stop-color="#3EA83A"/></linearGradient>
<linearGradient id="minusG" x1="0" y1="0" x2="1" y2="1"><stop offset="0" stop-color="#FF8050"/><stop offset="1" stop-color="#E81800"/></linearGradient>
<radialGradient id="ballG" cx="0.35" cy="0.3" r="0.75"><stop offset="0" stop-color="#FFFFFF"/><stop offset="0.5" stop-color="#A0A0A0"/><stop offset="1" stop-color="#303030"/></radialGradient>
<radialGradient id="yballG" cx="0.35" cy="0.7" r="0.75"><stop offset="0" stop-color="#FFFFF0"/><stop offset="0.6" stop-color="#FFD040"/><stop offset="1" stop-color="#D09000"/></radialGradient>
<radialGradient id="smileG" cx="0.5" cy="0.4" r="0.6"><stop offset="0" stop-color="#FFFF40"/><stop offset="0.7" stop-color="#F0E000"/><stop offset="1" stop-color="#A08000"/></radialGradient>
<linearGradient id="folderG" x1="0" y1="0" x2="1" y2="1"><stop offset="0" stop-color="#FFFBD0"/><stop offset="1" stop-color="#F8D000"/></linearGradient>
<radialGradient id="clockG" cx="0.4" cy="0.4"><stop offset="0" stop-color="#FFFFFF"/><stop offset="1" stop-color="#90D0F0"/></radialGradient>
<linearGradient id="keyL" x1="0" y1="0" x2="0" y2="1"><stop offset="0" stop-color="#F4F4F4"/><stop offset="1" stop-color="#E0E0E0"/></linearGradient><linearGradient id="keyR" x1="0" y1="0" x2="1" y2="0"><stop offset="0" stop-color="#E8E8E8"/><stop offset="1" stop-color="#6A6A6A"/></linearGradient><linearGradient id="keyG" x1="0" y1="0" x2="1" y2="0"><stop offset="0" stop-color="#D8D8D8"/><stop offset="0.4" stop-color="#FFFFFF"/><stop offset="1" stop-color="#808080"/></linearGradient>
<linearGradient id="pencilG" x1="0" y1="0" x2="1" y2="1"><stop offset="0" stop-color="#A0F080"/><stop offset="1" stop-color="#208020"/></linearGradient>
<radialGradient id="coinG" cx="0.4" cy="0.35" r="0.7"><stop offset="0" stop-color="#80B080"/><stop offset="1" stop-color="#2E6A30"/></radialGradient>
<linearGradient id="noteG" x1="0" y1="0" x2="1" y2="1"><stop offset="0" stop-color="#FFFFC0"/><stop offset="1" stop-color="#FFF080"/></linearGradient>
<linearGradient id="truckG" x1="0" y1="0" x2="1" y2="0"><stop offset="0" stop-color="#F04020"/><stop offset="1" stop-color="#FFB0A0"/></linearGradient>
<linearGradient id="cabG" x1="0" y1="0" x2="0" y2="1"><stop offset="0" stop-color="#A0C0F0"/><stop offset="1" stop-color="#6070A0"/></linearGradient>
<linearGradient id="cloudG" x1="0" y1="0" x2="1" y2="0.6"><stop offset="0" stop-color="#FFFFFF"/><stop offset="0.45" stop-color="#F4F4F4"/><stop offset="0.75" stop-color="#909090"/><stop offset="1" stop-color="#A8A8A8"/></linearGradient>
<linearGradient id="boltG" x1="0" y1="0" x2="0" y2="1"><stop offset="0" stop-color="#FFD820"/><stop offset="1" stop-color="#F0C000"/></linearGradient>
<linearGradient id="exitG" x1="0" y1="0" x2="1" y2="1"><stop offset="0" stop-color="#F08070"/><stop offset="0.35" stop-color="#F03A10"/><stop offset="0.7" stop-color="#F04810"/><stop offset="1" stop-color="#FFA040"/></linearGradient>
</defs></svg><svg style="position:absolute;left:10px;top:57px" width="34" height="34" viewBox="0 0 34 34"><path d="M9.5 6.5 H20.5 L26.5 12.5 V27.5 H9.5 Z" fill="url(#pageG)" stroke="#4A6A9A" stroke-width="1"/><path d="M20.5 6.5 V12.5 H26.5 Z" fill="url(#foldG)" stroke="#4A6A9A" stroke-width="0.8"/><circle cx="12.8" cy="11.8" r="5.6" fill="url(#burstG)"/><path d="M12.8 7.5 L13.6 10.6 L16.8 10.2 L14.2 12.2 L15.6 15.2 L12.8 13.4 L10.2 15.4 L11.3 12.3 L8.8 10.4 L12 10.6 Z" fill="#FFE000"/><circle cx="12.8" cy="11.8" r="1.6" fill="#FFC800"/></svg><svg style="position:absolute;left:45px;top:57px" width="29" height="34" viewBox="0 0 29 34"><path d="M3.3 10.2 H26.5 V19 Q26.5 21.5 22 23.5 L19 25 H10.5 L7 23.5 Q3.3 21.5 3.3 19 Z" fill="url(#printG)" stroke="#8A8A8A" stroke-width="0.8"/><path d="M7.2 10 H22.7 V15.5 Q22.7 17.8 20.5 17.8 H9.4 Q7.2 17.8 7.2 15.5 Z" fill="url(#trayG)"/><path d="M10.5 4.3 H15.5 L19.6 8.4 V13 H10.5 Z" fill="#FFFFFF" stroke="#8A8A8A" stroke-width="0.8"/><path d="M15.5 4.3 V8.4 H19.6" fill="none" stroke="#8A8A8A" stroke-width="0.7"/><rect x="10" y="12.6" width="10" height="1.4" fill="#8A8A9C"/><rect x="10.5" y="21.6" width="9.3" height="6" fill="#FFFFFF" stroke="#8A8A8A" stroke-width="0.8"/><circle cx="23.4" cy="19.5" r="1" fill="#20B020"/></svg><svg style="position:absolute;left:88px;top:57px" width="34" height="34" viewBox="0 0 34 34"><path d="M6.5 7.5 H26.5 V27 Q26.5 28 25.5 28 H10 L6.5 24.5 Z" fill="url(#floppyG)" stroke="#1466C0" stroke-width="1"/><rect x="9.5" y="7.5" width="14" height="10" fill="#FFF6D0" stroke="#D08A30" stroke-width="1.2"/><rect x="11" y="10" width="11" height="1.6" fill="#F8A830"/><rect x="11" y="13.3" width="11" height="1.6" fill="#F8A830"/><rect x="11" y="20" width="8" height="7" fill="#FFFFFF"/><rect x="13" y="22" width="1.8" height="3" fill="#1C6AD0"/></svg><svg style="position:absolute;left:123px;top:57px" width="34" height="34" viewBox="0 0 34 34"><path d="M9 24 L22 10" stroke="#E0E0E0" stroke-width="4" opacity="0.6"/><path d="M8.5 24.5 L25.5 7.5" stroke="#F2A208" stroke-width="4.2"/><path d="M8 23.5 L25 6.5" stroke="#FFD040" stroke-width="1.2"/><path d="M24.5 8.5 L27.5 5.5" stroke="#303030" stroke-width="4.2"/><path d="M26.8 6.2 L28.8 4.2" stroke="#F05020" stroke-width="4.2" stroke-linecap="round"/><path d="M6.2 24.3 L9.7 27.8 L5.5 28.5 Z" fill="#F8D8B0"/><path d="M5.6 26.5 L7.5 28.4 L5.3 28.8 Z" fill="#222"/></svg><svg style="position:absolute;left:158px;top:57px" width="34" height="34" viewBox="0 0 34 34"><path d="M7 11 L11 7 L17 13 L23 7 L27 11 L21 17 L27 23 L23 27 L17 21 L11 27 L7 23 L13 17 Z" fill="url(#xG)" stroke="#B01010" stroke-width="0.8"/></svg><svg style="position:absolute;left:193px;top:57px" width="34" height="34" viewBox="0 0 34 34"><path d="M10 11.5 L16.5 8.8 Q18.5 8.5 20 9.8 L17 16 L12 15 Z" fill="#4A4A4A"/><g transform="translate(6.2,12.6) rotate(39)"><rect x="-1.5" y="-4.2" width="13.5" height="8.4" rx="3.5" fill="url(#binoG)" stroke="#2E2E2E" stroke-width="0.7"/></g><g transform="translate(15.8,10.6) rotate(37)"><rect x="-1.5" y="-3.8" width="12.5" height="7.6" rx="3.2" fill="url(#binoG)" stroke="#2E2E2E" stroke-width="0.7"/></g><ellipse cx="16" cy="20.6" rx="3.3" ry="3.7" fill="url(#lensG)" stroke="#3A3A3A" stroke-width="0.8"/><ellipse cx="25.5" cy="18.4" rx="3.1" ry="3.5" fill="url(#lensG)" stroke="#3A3A3A" stroke-width="0.8"/></svg><svg style="position:absolute;left:231px;top:57px" width="34" height="34" viewBox="0 0 34 34"><path d="M5 4.5 H14.5 L19.5 9.5 V22.5 H5 Z" fill="url(#pageG)" stroke="#3A62A8" stroke-width="1"/><path d="M14.5 4.5 V9.5 H19.5 Z" fill="url(#foldG)" stroke="#3A62A8" stroke-width="0.8"/><rect x="6" y="5.5" width="6.5" height="2.5" fill="#F02010"/><path d="M8 17 H14 M8 19.5 H14" stroke="#3A62A8" stroke-width="0.9"/><path d="M15.5 11.5 H25.0 L29.5 16.0 V29.5 H15.5 Z" fill="url(#pageG)" stroke="#3A62A8" stroke-width="1"/><path d="M25.0 11.5 V16.0 H29.5 Z" fill="url(#foldG)" stroke="#3A62A8" stroke-width="0.8"/><rect x="16.5" y="12.5" width="5" height="2.3" fill="#F02010"/><path d="M18 19 H27 M18 21.5 H27 M18 24 H27 M18 26.5 H27" stroke="#3A62A8" stroke-width="0.9"/><path d="M11.06 8.94 L21.06 18.94 L23.6 16.4 L23.6 24.6 L15.4 24.6 L17.94 22.06 L7.94 12.06 Z" fill="#FF0000" stroke="#000" stroke-width="0.8" stroke-linejoin="round"/></svg><svg style="position:absolute;left:266px;top:57px" width="34" height="34" viewBox="0 0 34 34"><path d="M9.2 5.2 Q8 8 9.5 10 L16.8 19.5 L18.8 18 L12 8.5 Q10.5 6 9.2 5.2 Z" fill="#FFFFFF" stroke="#8A8A8A" stroke-width="0.9"/><path d="M23.8 5.2 Q25 8 23.5 10 L16.2 19.5 L14.2 18 L21 8.5 Q22.5 6 23.8 5.2 Z" fill="#FFFFFF" stroke="#8A8A8A" stroke-width="0.9"/><path d="M16.5 19.5 L13.5 20.5 M16.5 19.5 L19.5 20.5" stroke="#2070D0" stroke-width="1.5"/><circle cx="12.3" cy="23.6" r="3.4" fill="none" stroke="#1E78D8" stroke-width="2"/><circle cx="21.7" cy="23.6" r="3.4" fill="none" stroke="#1E78D8" stroke-width="2"/></svg><svg style="position:absolute;left:301px;top:57px" width="34" height="34" viewBox="0 0 34 34"><path d="M6.5 6.5 H14.5 L18.5 10.5 V22.5 H6.5 Z" fill="url(#pageG)" stroke="#4A6A9A" stroke-width="1"/><path d="M14.5 6.5 V10.5 H18.5 Z" fill="url(#foldG)" stroke="#4A6A9A" stroke-width="0.8"/><path d="M14.5 11.5 H22.0 L27.5 17.0 V27.5 H14.5 Z" fill="url(#pageG)" stroke="#4A6A9A" stroke-width="1"/><path d="M22.0 11.5 V17.0 H27.5 Z" fill="url(#foldG)" stroke="#4A6A9A" stroke-width="0.8"/></svg><svg style="position:absolute;left:336px;top:57px" width="34" height="34" viewBox="0 0 34 34"><rect x="5.5" y="6.5" width="16.5" height="18" rx="1" fill="url(#clipG)" stroke="#C88820" stroke-width="0.9"/><rect x="10" y="5.3" width="7.5" height="4" fill="#F4F4F4" stroke="#777" stroke-width="0.9"/><path d="M13.5 11 H23.5 L28.5 16 V29 H13.5 Z" fill="url(#pageG)" stroke="#7A8CE0" stroke-width="1"/><path d="M23.5 11 V16 H28.5 Z" fill="url(#foldG)" stroke="#7A8CE0" stroke-width="0.8"/></svg><svg style="position:absolute;left:372px;top:57px" width="69" height="34" viewBox="0 0 69 34"><path d="M2.5 10.5 Q4 7 9 6 L12.5 5.2 Q13.5 6 12.5 8 L17 9.5 L18.5 8.5 L22.5 12 V24 L14 28.5 L2.5 24.5 Z" fill="url(#boxG)" stroke="#C09020" stroke-width="0.7"/><path d="M4.5 10.5 Q7 8 12 7.5 L14 10 Q10 12 6 13 Z" fill="#B08010" opacity="0.55"/><path d="M17.5 22.5 L22.5 27.5" stroke="#F05A28" stroke-width="3" stroke-linecap="round"/><path d="M18.2 22.3 L19.8 24.8 M20 24 L21.6 26.4" stroke="#FFD040" stroke-width="1"/><circle cx="22.7" cy="27.7" r="1" fill="#E0E0E0"/><circle cx="13" cy="17.5" r="5.2" fill="url(#lensB)" stroke="#9AAAB4" stroke-width="1"/><text x="30" y="16" font-family="Liberation Sans" font-weight="bold" font-size="11" textLength="32.3" lengthAdjust="spacingAndGlyphs" fill="#000">Search</text><text x="25" y="25" font-family="Liberation Sans" font-weight="bold" font-size="11" textLength="43.1" lengthAdjust="spacingAndGlyphs" fill="#000">Inventory</text></svg><svg style="position:absolute;left:442px;top:57px" width="9" height="34" viewBox="0 0 9 34"><path d="M1.2 11.2 H7.3 L4.25 15.8 Z M1.2 17.2 H7.3 L4.25 21.8 Z" fill="#111" stroke="#111" stroke-width="0.6" stroke-linejoin="round"/><rect x="3.7" y="12.2" width="1.1" height="1" fill="#fff" opacity="0.8"/><rect x="3.7" y="18.2" width="1.1" height="1" fill="#fff" opacity="0.8"/></svg><svg style="position:absolute;left:559px;top:57px" width="9" height="34" viewBox="0 0 9 34"><path d="M1.2 11.2 H7.3 L4.25 15.8 Z M1.2 17.2 H7.3 L4.25 21.8 Z" fill="#111" stroke="#111" stroke-width="0.6" stroke-linejoin="round"/><rect x="3.7" y="12.2" width="1.1" height="1" fill="#fff" opacity="0.8"/><rect x="3.7" y="18.2" width="1.1" height="1" fill="#fff" opacity="0.8"/></svg><svg style="position:absolute;left:708px;top:57px" width="9" height="34" viewBox="0 0 9 34"><path d="M1.2 11.2 H7.3 L4.25 15.8 Z M1.2 17.2 H7.3 L4.25 21.8 Z" fill="#9A9A9A" stroke="#9A9A9A" stroke-width="0.6" stroke-linejoin="round"/></svg><svg style="position:absolute;left:452px;top:57px" width="34" height="34" viewBox="0 0 34 34"><path d="M10.6 4.8 L17 16.2 Q10.8 18.2 4.6 16.2 Z" fill="url(#coneG)"/><path d="M8.2 17.5 Q6.5 23.5 12.5 24" fill="none" stroke="url(#arrG)" stroke-width="3.6"/><path d="M11.5 19.8 L17 24.2 L11.3 27.8 Z" fill="#60D060"/><path d="M17.2 17.8 L21.5 15.8 L29 17.5 V26.5 L24.5 29 L17.2 27 Z" fill="url(#cubeG)" stroke="#2A4AB8" stroke-width="0.5"/><path d="M17.2 17.8 L24.5 19.5 L29 17.5 M24.5 19.5 V29" stroke="#3050C8" stroke-width="0.5" fill="none"/></svg><svg style="position:absolute;left:489px;top:57px" width="69" height="34" viewBox="0 0 69 34"><path d="M3 20 V9 L6.5 11.5 V9 L10 11.5 V9 L13.5 11.5 V6 H16.5 V20 Z" fill="#F84818" stroke="#D03010" stroke-width="0.6"/><rect x="5" y="15" width="1.8" height="1.8" fill="#111"/><rect x="9.5" y="15" width="1.8" height="1.8" fill="#111"/><rect x="13" y="15" width="1.8" height="1.8" fill="#111"/><path d="M9 27.5 V17.5 L12.5 19.5 V17.5 L16 19.5 V17.5 L19.5 19.5 V14 H22.5 V27.5 Z" fill="#6E90B0" stroke="#4E7090" stroke-width="0.6"/><rect x="11" y="23" width="1.8" height="1.8" fill="#111"/><rect x="15.5" y="23" width="1.8" height="1.8" fill="#111"/><rect x="19.5" y="23" width="1.8" height="1.8" fill="#111"/><text x="26.6" y="20.5" font-family="Liberation Sans" font-weight="bold" font-size="11" textLength="41.3" lengthAdjust="spacingAndGlyphs" fill="#000">Sub Rent</text></svg><svg style="position:absolute;left:573px;top:57px" width="34" height="34" viewBox="0 0 34 34"><path d="M15.5 6.5 H18.5 V11.5 H23.5 V14.5 H18.5 V19.5 H15.5 V14.5 H10.5 V11.5 H15.5 Z" fill="url(#plusG)" stroke="#1A8A1A" stroke-width="1.2"/><rect x="9" y="22" width="16" height="4.8" fill="url(#minusG)"/></svg><svg style="position:absolute;left:608px;top:57px" width="34" height="34" viewBox="0 0 34 34"><circle cx="10.2" cy="9.8" r="5.8" fill="url(#ballG)" stroke="#111" stroke-width="0.9"/><circle cx="10.2" cy="22.2" r="5.8" fill="url(#ballG)" stroke="#111" stroke-width="0.9"/><circle cx="22.6" cy="22.2" r="5.8" fill="url(#ballG)" stroke="#111" stroke-width="0.9"/><circle cx="22.6" cy="9.8" r="5.8" fill="url(#yballG)" stroke="#111" stroke-width="0.9"/><text x="20.2" y="13" font-family="Liberation Sans" font-weight="bold" font-size="9" fill="#222">?</text></svg><svg style="position:absolute;left:643px;top:57px" width="34" height="34" viewBox="0 0 34 34"><path d="M6.5 7 L19.5 8 L20.5 25.5 L7.5 27.5 Z" fill="#F4F8FF" stroke="#6A6AC8" stroke-width="0.9"/><path d="M8 12 H19 M8 15 H19 M8 18 H19 M8 21 H19" stroke="#B8D4F0" stroke-width="0.8"/><path d="M11 8 V27" stroke="#F07050" stroke-width="0.8"/><path d="M7 7.5 H19" stroke="#111" stroke-width="1.6" stroke-dasharray="1 0.8"/><path d="M14.5 21 L25 9.5" stroke="#1E8A1E" stroke-width="4.4"/><path d="M14.3 20.3 L24.6 9" stroke="#7EE060" stroke-width="2"/><path d="M13 20.5 L15.5 23 L13 23.8 Z" fill="#D8B080"/><path d="M23.3 7.8 L26.2 10.8" stroke="#E0E0E0" stroke-width="1.2"/><circle cx="25.8" cy="8" r="2.7" fill="#E83818"/><circle cx="25.2" cy="7.3" r="1" fill="#FF8060"/></svg><svg style="position:absolute;left:678px;top:57px" width="29" height="34" viewBox="0 0 29 34"><rect x="16" y="12" width="10" height="16.5" fill="#A4A4A4"/><rect x="3" y="8.5" width="22" height="19" fill="#AAAAAA"/><path d="M6 5.5 V10 M9 5.5 V10 M12 5.5 V10 M15 5.5 V10 M18 5.5 V10 M21 5.5 V10" stroke="#EEEEEE" stroke-width="1.2"/><path d="M6 6.5 V10 M9 6.5 V10 M12 6.5 V10 M15 6.5 V10 M18 6.5 V10 M21 6.5 V10" stroke="#909090" stroke-width="0.5" transform="translate(0.7,0)"/><text x="7.5" y="20.5" font-family="Liberation Sans" font-weight="bold" font-size="10.5" fill="#8E8E8E">12</text><path d="M15.5 19.5 L19 26 L23.5 16.5" stroke="#8E8E8E" stroke-width="1.8" fill="none"/></svg><svg style="position:absolute;left:722px;top:57px" width="34" height="34" viewBox="0 0 34 34"><path d="M9.5 17.5 V10.8 H12.5 M24.3 17.5 V10.8 H21.5" stroke="#222" stroke-width="1" fill="none"/><rect x="12.6" y="4.5" width="8.8" height="11" fill="#fff" stroke="#222" stroke-width="0.9"/><rect x="13" y="5" width="8" height="2" fill="#F00"/><path d="M14.5 9.5 H19.5 M14.5 12.5 H19.5" stroke="#222" stroke-width="0.9"/><rect x="6.4" y="17.5" width="9" height="11" fill="#fff" stroke="#222" stroke-width="0.9"/><rect x="6.8" y="18" width="8.2" height="2" fill="#F00"/><path d="M8.3 22.5 H13.5 M8.3 25.5 H13.5" stroke="#222" stroke-width="0.9"/><rect x="19.5" y="17.5" width="9" height="11" fill="#fff" stroke="#222" stroke-width="0.9"/><rect x="19.9" y="18" width="8.2" height="2" fill="#F00"/><path d="M21.3 22.5 H26.5 M21.3 25.5 H26.5" stroke="#222" stroke-width="0.9"/></svg><svg style="position:absolute;left:758px;top:57px" width="34" height="34" viewBox="0 0 34 34"><ellipse cx="17" cy="24.5" rx="10" ry="3" fill="#000" opacity="0.25"/><circle cx="17" cy="15.5" r="9.8" fill="url(#smileG)"/><path d="M14.5 11 V13.5 M19.5 11 V13.5" stroke="#333" stroke-width="1.1"/><path d="M11 17 Q17 23 23 17" stroke="#333" stroke-width="1" fill="none"/></svg><svg style="position:absolute;left:793px;top:57px" width="34" height="34" viewBox="0 0 34 34"><path d="M6.5 13.5 H11 L16 26 H10 Z" fill="#F8D040" stroke="#E0A020" stroke-width="0.8"/><path d="M11.5 10 H20.5 L21.5 8 H27.5 V25 L11.5 26.5 Z" fill="url(#folderG)" stroke="#E0A020" stroke-width="0.8"/><circle cx="21.5" cy="21.2" r="5.8" fill="url(#clockG)" stroke="#8A8A8A" stroke-width="0.9"/><path d="M18.8 18.5 L21.3 22.5 L23.8 19" stroke="#111" stroke-width="1" fill="none"/></svg><svg style="position:absolute;left:828px;top:57px" width="34" height="34" viewBox="0 0 34 34"><path d="M8.3 10.2 L15.6 7.1 L25.8 10.2 L28.9 18.4 L17.3 26.5 L4.5 19.2 Z" fill="#E0E0E0" stroke="#8A8A8A" stroke-width="0.8" stroke-linejoin="round"/><path d="M8.3 10.2 L17 15.1 L17.3 26.5 L4.5 19.2 Z" fill="url(#keyL)"/><path d="M17 15.1 L25.8 10.2 L28.9 18.4 L17.3 26.5 Z" fill="url(#keyR)"/><path d="M8.3 10.2 L15.6 7.1 L25.8 10.2 L17 15.1 Z" fill="#F6F6F6"/><path d="M11 11.8 L21 9.3 L17.2 14 M15 10.9 L18.6 12" fill="none" stroke="#1E66E8" stroke-width="1.9" stroke-linecap="round" stroke-linejoin="round"/></svg><svg style="position:absolute;left:863px;top:57px" width="34" height="34" viewBox="0 0 34 34"><rect x="11.5" y="9" width="8" height="5" fill="#30A030" stroke="#000" stroke-width="1.2"/><rect x="13.0" y="10.2" width="3" height="2.6" fill="#fff" opacity="0.45"/><rect x="11.5" y="14" width="8" height="5" fill="#3050E0" stroke="#000" stroke-width="1.2"/><rect x="13.0" y="15.2" width="3" height="2.6" fill="#fff" opacity="0.45"/><rect x="11.5" y="19" width="8" height="6" fill="#E03030" stroke="#000" stroke-width="1.2"/><rect x="13.0" y="20.2" width="3" height="3.6" fill="#fff" opacity="0.45"/><rect x="3.5" y="12" width="11" height="6" fill="#30A030" stroke="#000" stroke-width="1.2"/><rect x="5.0" y="13.2" width="3" height="3.6" fill="#fff" opacity="0.45"/><rect x="3.5" y="18" width="11" height="5" fill="#4060F0" stroke="#000" stroke-width="1.2"/><rect x="5.0" y="19.2" width="3" height="2.6" fill="#fff" opacity="0.45"/><rect x="3.5" y="23" width="11" height="5" fill="#F04040" stroke="#000" stroke-width="1.2"/><rect x="5.0" y="24.2" width="3" height="2.6" fill="#fff" opacity="0.45"/><rect x="18.5" y="5.5" width="12" height="6" fill="#F0F040" stroke="#000" stroke-width="1.2"/><rect x="20.0" y="6.7" width="3" height="3.6" fill="#fff" opacity="0.45"/><rect x="18.5" y="11.5" width="12" height="5.5" fill="#40B040" stroke="#000" stroke-width="1.2"/><rect x="20.0" y="12.7" width="3" height="3.1" fill="#fff" opacity="0.45"/><rect x="18.5" y="17.0" width="12" height="5" fill="#4060F0" stroke="#000" stroke-width="1.2"/><rect x="20.0" y="18.2" width="3" height="2.6" fill="#fff" opacity="0.45"/><rect x="18.5" y="22.0" width="12" height="5" fill="#F04040" stroke="#000" stroke-width="1.2"/><rect x="20.0" y="23.2" width="3" height="2.6" fill="#fff" opacity="0.45"/></svg><svg style="position:absolute;left:898px;top:57px" width="34" height="34" viewBox="0 0 34 34"><rect x="5.5" y="5.5" width="18" height="23" fill="url(#pageG)" stroke="#2A7ACC" stroke-width="1"/><rect x="6" y="6" width="17" height="3" fill="#F8A030"/><path d="M9 10.5 H17.5 M10 12.5 H15 M9 14.5 H16.5 M9 16.5 H13 M9 18.5 H12" stroke="#2A70C0" stroke-width="0.9"/><path d="M14.5 23 L26 11" stroke="url(#pencilG)" stroke-width="4"/><path d="M25.5 11.5 L28.5 8.5" stroke="#F04820" stroke-width="4.2" stroke-linecap="round"/><path d="M12.8 21.5 L16 24.8 L11.6 26 Z" fill="#F0C860"/><path d="M11.8 24.5 L13 25.6 L11.4 26.2 Z" fill="#111"/></svg><svg style="position:absolute;left:933px;top:57px" width="34" height="34" viewBox="0 0 34 34"><path d="M14.5 8.5 L16.5 6.3 L21.5 12 L17 17 L15 15 L17.5 12 Z" fill="#2A7AE8"/><path d="M20.5 8.5 L22.5 6.3 L27.8 12.5 L22 19.5 L20 17.5 L23.8 12.5 Z" fill="#2A7AE8"/><circle cx="13" cy="21.8" r="6.8" fill="url(#coinG)"/><text x="9.3" y="26" font-family="Liberation Sans" font-weight="bold" font-size="11" fill="#fff">$</text></svg><svg style="position:absolute;left:968px;top:57px" width="34" height="34" viewBox="0 0 34 34"><path d="M9.5 6.5 L25.5 4.5 L29.5 17 L16 22.5 Z" fill="url(#noteG)" stroke="#F0C020" stroke-width="0.9"/><path d="M12 9.5 L24 8 M12.5 12 L25 10.5 M13 14.5 L26 13 M14 17 L27 15.5" stroke="#C8A850" stroke-width="0.9"/><circle cx="11.8" cy="22.7" r="6.8" fill="url(#coinG)"/><text x="8.1" y="27" font-family="Liberation Sans" font-weight="bold" font-size="11" fill="#fff">$</text></svg><svg style="position:absolute;left:1003px;top:57px" width="34" height="34" viewBox="0 0 34 34"><path d="M4 9 L9 6 H17 V14 L9 16.5 L4 15 Z" fill="#208020"/><path d="M4 11.5 H15 V13.5 H4 Z" fill="#3040D0"/><path d="M4 14 H15 V15.5 H4 Z" fill="#D03030"/><path d="M10 8.5 Q17 6 19 11.5 L21.5 10.5 L19 15.5 L15 13.5 L17 12.5 Q15 9.5 10 10.5 Z" fill="#10C010"/><ellipse cx="13.5" cy="5.8" rx="3" ry="1.2" fill="#E0E060"/><path d="M8 18.5 L17.5 16.5 V25.5 L8 26.5 Z" fill="url(#truckG)"/><path d="M17.5 19 H27 Q28.5 19.5 28.5 22 V27.5 H17.5 Z" fill="url(#cabG)" stroke="#505A80" stroke-width="0.6"/><rect x="20.5" y="20" width="7" height="2.5" fill="#C0E0FF"/><circle cx="11" cy="27" r="1.6" fill="#222"/><circle cx="20" cy="28.3" r="1.6" fill="#222"/><circle cx="26" cy="28.3" r="1.6" fill="#222"/></svg><svg style="position:absolute;left:1073px;top:57px" width="34" height="34" viewBox="0 0 34 34"><rect x="1" y="1" width="32" height="32" fill="#CCCCCC"/><path d="M1.5 32 V1.5 H32" stroke="#FFFFFF" stroke-width="1" fill="none"/><path d="M9 13 Q9.5 9.5 13 9.5 Q15 7 18.5 8.5 Q21 6.5 23 9 Q26.5 10 26 14 Q28 17 25.5 19.5 Q24.5 22.5 21 22 Q18 24 14.5 21.5 Q11 22.5 9.5 19.5 Q6.5 17 9 13 Z" fill="url(#cloudG)" stroke="#3A3A3A" stroke-width="0.8"/><path d="M26.5 6.8 L15.5 13 L19 16 L7 26.7 L24.5 17.2 L21 14.5 Z" fill="url(#boltG)" stroke="#5A4A00" stroke-width="0.7" stroke-linejoin="round"/></svg><svg style="position:absolute;left:1144px;top:57px" width="35" height="34" viewBox="0 0 35 34"><rect x="6.5" y="6.5" width="21" height="21" rx="2" fill="url(#exitG)" stroke="#A80808" stroke-width="1"/><text x="8" y="21.2" font-family="Liberation Sans" font-size="10" textLength="18.5" lengthAdjust="spacingAndGlyphs" fill="#fff">EXIT</text></svg>
</body></html>
